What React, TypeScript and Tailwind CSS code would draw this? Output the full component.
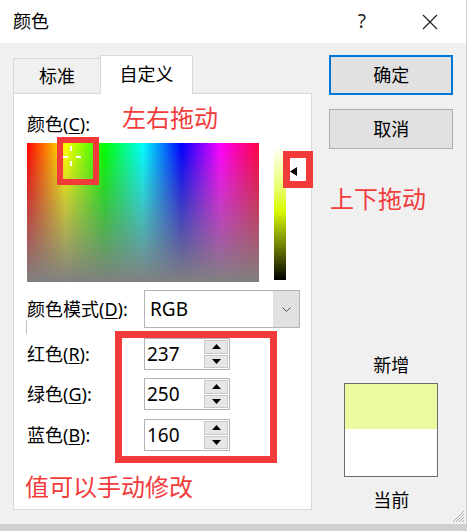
import React from 'react';

const FONT = "font-['Noto_Sans','Noto_Sans_CJK_SC',sans-serif]";

function Spinner({ value }: { value: string }) {
  return (
    <div className="flex h-[32px] w-[86px] items-stretch border border-[#b4b4b4] bg-white">
      <span className="flex-1 pl-[2px] text-[19px] leading-[30px] text-black">{value}</span>
      <div className="my-[1px] mr-[1px] flex w-[24px] flex-col gap-[1px]">
        <div className="flex flex-1 items-center justify-center border border-[#c8c8c8] bg-[#e6e6e6]">
          <svg width="9" height="5" viewBox="0 0 9 5"><path d="M0 5 L4.5 0 L9 5 Z" fill="#000" /></svg>
        </div>
        <div className="flex flex-1 items-center justify-center border border-[#c8c8c8] bg-[#e6e6e6]">
          <svg width="9" height="5" viewBox="0 0 9 5"><path d="M0 0 L4.5 5 L9 0 Z" fill="#000" /></svg>
        </div>
      </div>
    </div>
  );
}

function Label({ text, k }: { text: string; k: string }) {
  return (
    <span className="w-[117px] text-[18px] leading-[24px] text-black">
      {text}(<span className="underline underline-offset-2">{k}</span>):
    </span>
  );
}

export default function App() {
  return (
    <div className={`relative h-[531px] w-[467px] overflow-hidden bg-[#cfcfcf] ${FONT}`}>
      <div className="flex h-[524px] flex-col border-r border-[#d4d4d4] bg-[#f0f0f0]">
        {/* title bar */}
        <div className="flex h-[43px] items-center bg-white pl-[13px]">
          <span className="flex-1 text-[18px] text-black">颜色</span>
          <span className="mr-[56px] text-[19px] text-[#222]">?</span>
          <svg width="16" height="16" viewBox="0 0 16 16" className="mr-[28px]">
            <path d="M1 1 L15 15 M15 1 L1 15" stroke="#222" strokeWidth="1.2" />
          </svg>
        </div>

        <div className="flex flex-1 px-[13px] pt-[12px]">
          {/* left */}
          <div className="flex w-[300px] flex-col">
            <div className="flex h-[38px] items-end">
              <div className="flex h-[35px] w-[88px] items-center justify-center border border-b-0 border-[#d9d9d9] bg-[#f0f0f0] text-[18px] text-black">
                标准
              </div>
              <div className="relative z-10 -mb-px -ml-px flex h-[39px] w-[93px] items-center justify-center border border-b-0 border-[#d9d9d9] bg-white pb-[2px] text-[18px] text-black">
                自定义
              </div>
            </div>
            <div className="relative h-[417px] border border-[#d9d9d9] bg-white pl-[13px] pt-[18px]">
              <Label text="颜色" k="C" />
              <div className="mt-[6px] flex">
                <div className="relative h-[139px] w-[232px] bg-[linear-gradient(to_right,#ff0000,#ffff00_16.6%,#00ff00_33.3%,#00ffff_50%,#0000ff_66.6%,#ff00ff_83.3%,#ff0040)]">
                  <div className="absolute inset-0 bg-[linear-gradient(to_bottom,rgba(128,128,128,0),#808080)]" />
                  <span className="absolute left-[43px] top-[3px] h-[5px] w-[2px] bg-white" />
                  <span className="absolute left-[43px] top-[18px] h-[5px] w-[2px] bg-white" />
                  <span className="absolute left-[36px] top-[13px] h-[2px] w-[5px] bg-white" />
                  <span className="absolute left-[49px] top-[13px] h-[2px] w-[5px] bg-white" />
                </div>
                <div className="ml-[15px] mt-[5px] h-[132px] w-[12px] bg-[linear-gradient(to_bottom,#fffff4,#eaff70_30%,#d8f800_48%,#7a8a00_72%,#000)]" />
              </div>

              <div className="mt-[8px] flex items-center">
                <Label text="颜色模式" k="D" />
                <div className="flex h-[38px] w-[156px] border border-[#b4b4b4] bg-white">
                  <span className="flex-1 pl-[5px] text-[19px] leading-[36px] text-black">RGB</span>
                  <div className="flex w-[26px] items-center justify-center bg-[#e1e1e1]">
                    <svg width="9" height="5" viewBox="0 0 9 5"><path d="M0.5 0.5 L4.5 4.5 L8.5 0.5" stroke="#555" fill="none" /></svg>
                  </div>
                </div>
              </div>
              <div className="absolute left-[12px] top-[226px] h-[14px] w-px bg-[#c0c0c0]" />

              <div className="mt-[10px] flex items-center">
                <Label text="红色" k="R" />
                <Spinner value="237" />
              </div>
              <div className="mt-[8px] flex items-center">
                <Label text="绿色" k="G" />
                <Spinner value="250" />
              </div>
              <div className="mt-[9px] flex items-center">
                <Label text="蓝色" k="B" />
                <Spinner value="160" />
              </div>
              <div className="-ml-[2px] mt-[20px] text-[24px] leading-[32px] text-[#f23c3c]">值可以手动修改</div>

              {/* annotations */}
              <span className="absolute left-[108px] top-[10px] text-[24px] leading-[28px] text-[#f23c3c]">左右拖动</span>
              <div className="absolute left-[43px] top-[43px] h-[48px] w-[42px] border-[6px] border-[#f23a3a]" />
              <div className="absolute left-[269px] top-[57px] h-[37px] w-[30px] border-[7px] border-[#f23a3a] bg-white">
                <svg width="7" height="9" viewBox="0 0 7 9" className="absolute left-0 top-[9px]"><path d="M0 4.5 L7 0 L7 9 Z" fill="#000" /></svg>
              </div>
              <div className="absolute left-[101px] top-[237px] h-[132px] w-[162px] border-[7px] border-[#f23a3a]" />
            </div>
          </div>

          {/* right */}
          <div className="ml-[17px] flex w-[124px] flex-col">
            <button className="flex h-[40px] items-center justify-center border-2 border-[#0078d7] bg-[#e1e1e1] text-[18px] text-black">
              确定
            </button>
            <button className="mt-[14px] flex h-[40px] items-center justify-center border border-[#adadad] bg-[#e1e1e1] text-[18px] text-black">
              取消
            </button>
            <span className="mt-[204px] text-center text-[18px] leading-[24px] text-black">新增</span>
            <div className="ml-[15px] mt-[6px] flex h-[94px] w-[94px] flex-col border border-[#6d6d6d]">
              <div className="h-[45px] bg-[#edfaa0]" />
              <div className="flex-1 bg-white" />
            </div>
            <span className="mt-[11px] text-center text-[18px] leading-[24px] text-black">当前</span>
          </div>
        </div>
      </div>

      <span className="absolute left-[330px] top-[185px] text-[24px] leading-[28px] text-[#f23c3c]">上下拖动</span>
      <svg width="14" height="14" viewBox="0 0 14 14" className="absolute left-[451px] top-[509px]">
        <path d="M13 2 L2 13 M13 5 L5 13 M13 8 L8 13 M13 11 L11 13" stroke="#b0b0b0" strokeWidth="1" />
      </svg>
    </div>
  );
}
